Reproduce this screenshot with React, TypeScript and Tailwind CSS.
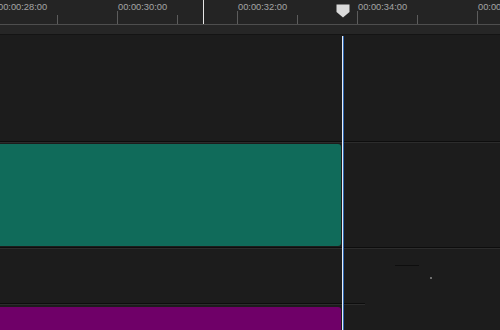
import React from 'react';

// one ruler segment = 2 seconds = 120px, minor tick halfway
const LABELS = ['00:00:28:00', '00:00:30:00', '00:00:32:00', '00:00:34:00', '00:00:36:00'];

const RulerSegment: React.FC<{ label: string; first?: boolean }> = ({ label, first }) => (
  <div className="flex w-[120px] h-full shrink-0">
    <div className={`self-end w-px h-[13px] ${first ? 'bg-transparent' : 'bg-[#5c5c5c]'}`} />
    <div className="flex flex-col flex-1">
      <span className="pt-[2px] text-[9.3px] leading-[11px] text-[#a4a4a4] whitespace-nowrap">{label}</span>
      <div className="flex flex-1 items-end pl-[59px]">
        <div className="w-px h-[9px] bg-[#5c5c5c]" />
      </div>
    </div>
  </div>
);

const Separator: React.FC<{ partial?: boolean }> = ({ partial }) => (
  <div className={partial ? 'w-[365px]' : 'w-full'}>
    <div className="h-px bg-[#0d0d0d]" />
    <div className="h-px bg-[#2c2c2c]" />
  </div>
);

const App: React.FC = () => {
  return (
    <div
      className="relative w-[500px] h-[330px] overflow-hidden bg-[#1c1c1c] select-none"
      style={{ fontFamily: '"Liberation Sans", Arial, sans-serif' }}
    >
      {/* Ruler */}
      <div className="relative h-[24px] bg-[#242424] overflow-hidden">
        <div className="flex h-full ml-[-3px]">
          {LABELS.map((l, i) => (
            <RulerSegment key={l} label={l} first={i === 0} />
          ))}
        </div>
        {/* in-point marker */}
        <div className="absolute left-[203px] top-0 bottom-0 w-px bg-[#e6e6e6]" />
        {/* playhead handle */}
        <svg className="absolute left-[336px] top-[4px]" width="14" height="14" viewBox="0 0 14 14">
          <path d="M0.5 0.5 H13.5 V8 L7 13.5 L0.5 8 Z" fill="#dadada" />
        </svg>
      </div>
      <div className="h-px bg-[#4e4e4e]" />
      <div className="h-[9px] bg-[#262626]" />
      <div className="h-px bg-[#141414]" />

      {/* Tracks */}
      <div className="flex flex-col">
        <div className="h-[106px]" />
        <Separator />
        <div className="h-[104px] py-px">
          <div className="h-full w-[341px] bg-[#106b5a] rounded-r-[3px]" />
        </div>
        <Separator />
        <div className="h-[54px] pl-[395px] pt-[16px]">
          <div className="w-[24px] h-px bg-[#0e0e0e]" />
          <div className="ml-[35px] mt-[11px] w-[2px] h-[2px] rounded-full bg-[#8a8a8a]" />
        </div>
        <Separator partial />
        <div className="h-[30px] pt-[2px]">
          <div className="h-full w-[341px] bg-[#6f0068] rounded-tr-[3px]" />
        </div>
      </div>

      {/* playhead line */}
      <div className="absolute left-[342px] top-[36px] bottom-0 w-px bg-[#e4ecf8]" />
      <div className="absolute left-[343px] top-[36px] bottom-0 w-px bg-[#2d64ad]" />
    </div>
  );
};

export default App;
